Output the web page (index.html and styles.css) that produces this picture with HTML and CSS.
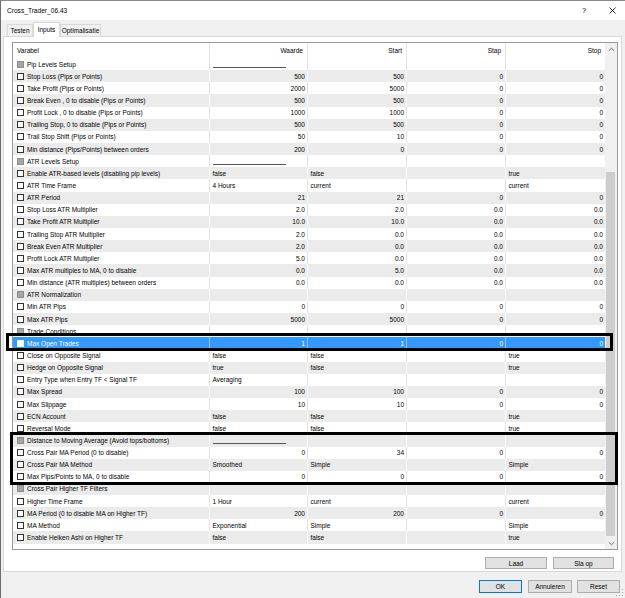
FILE: index.html
```html
<html lang="nl">
<head>
    <meta charset="UTF-8">
    <title>Cross_Trader_06.43</title>
    <link rel="stylesheet" href="styles.css">
</head>
<body>
<div class="window">
    <div class="titlebar">
        <div class="title">Cross_Trader_06.43</div>
        <div class="help">?</div>
        <div class="close">
            <svg width="7" height="7" viewBox="0 0 7 7"><path d="M0.5 0.5 L6.5 6.5 M6.5 0.5 L0.5 6.5" stroke="#000" stroke-width="0.8"/></svg>
        </div>
    </div>
    <div class="tabs">
        <div class="tab tab-testen">Testen</div>
        <div class="tab tab-inputs active">Inputs</div>
        <div class="tab tab-opt">Optimalisatie</div>
    </div>
    <div class="panel">
        <div class="grid">
            <div class="list">
                <div class="head">
                    <div class="h-left">Varabel</div>
                    <div>Waarde</div>
                    <div>Start</div>
                    <div>Stap</div>
                    <div>Stop</div>
                </div>
                <div class="rows">
                    <div class="row group"><div class="c"><span class="cb"></span>Pip Levels Setup</div><div class="t"><span class="line"></span></div><div></div><div></div><div></div></div>
                    <div class="row"><div class="c"><span class="cb"></span>Stop Loss (Pips or Points)</div><div class="n">500</div><div class="n">500</div><div class="n">0</div><div class="n">0</div></div>
                    <div class="row"><div class="c"><span class="cb"></span>Take Profit (Pips or Points)</div><div class="n">2000</div><div class="n">5000</div><div class="n">0</div><div class="n">0</div></div>
                    <div class="row"><div class="c"><span class="cb"></span>Break Even , 0 to disable (Pips or Points)</div><div class="n">500</div><div class="n">500</div><div class="n">0</div><div class="n">0</div></div>
                    <div class="row"><div class="c"><span class="cb"></span>Profit Lock , 0 to disable (Pips or Points)</div><div class="n">1000</div><div class="n">1000</div><div class="n">0</div><div class="n">0</div></div>
                    <div class="row"><div class="c"><span class="cb"></span>Trailing Stop, 0 to disable (Pips or Points)</div><div class="n">500</div><div class="n">500</div><div class="n">0</div><div class="n">0</div></div>
                    <div class="row"><div class="c"><span class="cb"></span>Trail Stop Shift (Pips or Points)</div><div class="n">50</div><div class="n">10</div><div class="n">0</div><div class="n">0</div></div>
                    <div class="row"><div class="c"><span class="cb"></span>Min distance (Pips/Points) between orders</div><div class="n">200</div><div class="n">0</div><div class="n">0</div><div class="n">0</div></div>
                    <div class="row group"><div class="c"><span class="cb"></span>ATR Levels Setup</div><div class="t"><span class="line"></span></div><div></div><div></div><div></div></div>
                    <div class="row"><div class="c"><span class="cb"></span>Enable ATR-based levels (disabling pip levels)</div><div class="t">false</div><div class="t">false</div><div></div><div class="t">true</div></div>
                    <div class="row"><div class="c"><span class="cb"></span>ATR Time Frame</div><div class="t">4 Hours</div><div class="t">current</div><div></div><div class="t">current</div></div>
                    <div class="row"><div class="c"><span class="cb"></span>ATR Period</div><div class="n">21</div><div class="n">21</div><div class="n">0</div><div class="n">0</div></div>
                    <div class="row"><div class="c"><span class="cb"></span>Stop Loss ATR Multiplier</div><div class="n">2.0</div><div class="n">2.0</div><div class="n">0.0</div><div class="n">0.0</div></div>
                    <div class="row"><div class="c"><span class="cb"></span>Take Profit ATR Multiplier</div><div class="n">10.0</div><div class="n">10.0</div><div class="n">0.0</div><div class="n">0.0</div></div>
                    <div class="row"><div class="c"><span class="cb"></span>Trailing Stop ATR Multiplier</div><div class="n">2.0</div><div class="n">0.0</div><div class="n">0.0</div><div class="n">0.0</div></div>
                    <div class="row"><div class="c"><span class="cb"></span>Break Even ATR Multiplier</div><div class="n">2.0</div><div class="n">0.0</div><div class="n">0.0</div><div class="n">0.0</div></div>
                    <div class="row"><div class="c"><span class="cb"></span>Profit Lock ATR Multiplier</div><div class="n">5.0</div><div class="n">0.0</div><div class="n">0.0</div><div class="n">0.0</div></div>
                    <div class="row"><div class="c"><span class="cb"></span>Max ATR multiples to MA, 0 to disable</div><div class="n">0.0</div><div class="n">5.0</div><div class="n">0.0</div><div class="n">0.0</div></div>
                    <div class="row"><div class="c"><span class="cb"></span>Min distance (ATR multiples) between orders</div><div class="n">0.0</div><div class="n">0.0</div><div class="n">0.0</div><div class="n">0.0</div></div>
                    <div class="row group"><div class="c"><span class="cb"></span>ATR Normalization</div><div></div><div></div><div></div><div></div></div>
                    <div class="row"><div class="c"><span class="cb"></span>Min ATR Pips</div><div class="n">0</div><div class="n">0</div><div class="n">0</div><div class="n">0</div></div>
                    <div class="row"><div class="c"><span class="cb"></span>Max ATR Pips</div><div class="n">5000</div><div class="n">5000</div><div class="n">0</div><div class="n">0</div></div>
                    <div class="row group"><div class="c"><span class="cb"></span>Trade Conditions</div><div></div><div></div><div></div><div></div></div>
                    <div class="row sel"><div class="c"><span class="cb"></span>Max Open Trades</div><div class="n">1</div><div class="n">1</div><div class="n">0</div><div class="n">0</div></div>
                    <div class="row"><div class="c"><span class="cb"></span>Close on Opposite Signal</div><div class="t">false</div><div class="t">false</div><div></div><div class="t">true</div></div>
                    <div class="row"><div class="c"><span class="cb"></span>Hedge on Opposite Signal</div><div class="t">true</div><div class="t">false</div><div></div><div class="t">true</div></div>
                    <div class="row"><div class="c"><span class="cb"></span>Entry Type when Entry TF &lt; Signal TF</div><div class="t">Averaging</div><div></div><div></div><div></div></div>
                    <div class="row"><div class="c"><span class="cb"></span>Max Spread</div><div class="n">100</div><div class="n">100</div><div class="n">0</div><div class="n">0</div></div>
                    <div class="row"><div class="c"><span class="cb"></span>Max Slippage</div><div class="n">10</div><div class="n">10</div><div class="n">0</div><div class="n">0</div></div>
                    <div class="row"><div class="c"><span class="cb"></span>ECN Account</div><div class="t">false</div><div class="t">false</div><div></div><div class="t">true</div></div>
                    <div class="row"><div class="c"><span class="cb"></span>Reversal Mode</div><div class="t">false</div><div class="t">false</div><div></div><div class="t">true</div></div>
                    <div class="row group"><div class="c"><span class="cb"></span>Distance to Moving Average (Avoid tops/bottoms)</div><div class="t"><span class="line"></span></div><div></div><div></div><div></div></div>
                    <div class="row"><div class="c"><span class="cb"></span>Cross Pair MA Period (0 to disable)</div><div class="n">0</div><div class="n">34</div><div class="n">0</div><div class="n">0</div></div>
                    <div class="row"><div class="c"><span class="cb"></span>Cross Pair MA Method</div><div class="t">Smoothed</div><div class="t">Simple</div><div></div><div class="t">Simple</div></div>
                    <div class="row"><div class="c"><span class="cb"></span>Max Pips/Points to MA, 0 to disable</div><div class="n">0</div><div class="n">0</div><div class="n">0</div><div class="n">0</div></div>
                    <div class="row group"><div class="c"><span class="cb"></span>Cross Pair Higher TF Filters</div><div></div><div></div><div></div><div></div></div>
                    <div class="row"><div class="c"><span class="cb"></span>Higher Time Frame</div><div class="t">1 Hour</div><div class="t">current</div><div></div><div class="t">current</div></div>
                    <div class="row"><div class="c"><span class="cb"></span>MA Period (0 to disable MA on Higher TF)</div><div class="n">200</div><div class="n">200</div><div class="n">0</div><div class="n">0</div></div>
                    <div class="row"><div class="c"><span class="cb"></span>MA Method</div><div class="t">Exponential</div><div class="t">Simple</div><div></div><div class="t">Simple</div></div>
                    <div class="row"><div class="c"><span class="cb"></span>Enable Heiken Ashi on Higher TF</div><div class="t">false</div><div class="t">false</div><div></div><div class="t">true</div></div>
                </div>
            </div>
            <div class="scroll">
                <div class="arrow">
                    <svg width="7" height="5" viewBox="0 0 7 5"><path d="M0.8 3.8 L3.5 1.2 L6.2 3.8" fill="none" stroke="#606060" stroke-width="0.9"/></svg>
                </div>
                <div class="track">
                    <div class="thumb"></div>
                </div>
                <div class="arrow">
                    <svg width="7" height="5" viewBox="0 0 7 5"><path d="M0.8 1.2 L3.5 3.8 L6.2 1.2" fill="none" stroke="#606060" stroke-width="0.9"/></svg>
                </div>
            </div>
        </div>
        <div class="panel-buttons">
            <div class="btn btn-laad">Laad</div>
            <div class="btn btn-slaop">Sla op</div>
        </div>
    </div>
    <div class="footer">
        <div class="btn btn-ok">OK</div>
        <div class="btn btn-cancel">Annuleren</div>
        <div class="btn btn-reset">Reset</div>
    </div>

    <!-- annotation boxes drawn over the list -->
    <div class="mark mark-1"></div>
    <div class="mark mark-2"></div>

    <svg class="grip" width="8" height="8" viewBox="0 0 8 8">
        <rect x="6" y="0" width="1" height="1" fill="#aaa"/>
        <rect x="3" y="3" width="1" height="1" fill="#aaa"/>
        <rect x="6" y="3" width="1" height="1" fill="#aaa"/>
        <rect x="0" y="6" width="1" height="1" fill="#aaa"/>
        <rect x="3" y="6" width="1" height="1" fill="#aaa"/>
        <rect x="6" y="6" width="1" height="1" fill="#aaa"/>
    </svg>
</div>
</body>
</html>
```

FILE: styles.css
```css
* {
    box-sizing: border-box;
}
body {
    margin: 0;
    background: #f0f0f0;
    font-family: "Liberation Sans", Arial, sans-serif;
    font-size: 6.5px;
    color: #000;
}
.window {
    position: relative;
    width: 625px;
    height: 598px;
    border-left: 1px solid #6d6d6d;
    border-top: 1px solid #8a8a8a;
    overflow: hidden;
}
.titlebar {
    height: 19px;
    background: #fff;
    display: flex;
    align-items: center;
    padding-left: 6px;
}
.title {
    flex: 1;
    font-size: 6.6px;
}
.help {
    width: 30px;
    text-align: center;
    font-size: 7px;
}
.close {
    width: 26px;
    display: flex;
    justify-content: center;
}
.tabs {
    height: 16px;
    display: flex;
    align-items: flex-end;
    padding-left: 6px;
}
.tab {
    height: 12px;
    border: 1px solid #d9d9d9;
    border-bottom: none;
    background: #f0f0f0;
    display: flex;
    align-items: center;
    justify-content: center;
}
.tab-testen {
    width: 26px;
}
.tab-inputs {
    width: 27px;
}
.tab-opt {
    width: 41px;
}
.tab.active {
    height: 15px;
    background: #fff;
    margin-bottom: -1px;
    position: relative;
    z-index: 1;
    padding-bottom: 2px;
}
.panel {
    margin: 0 3px 0 2px;
    height: 536px;
    border: 1px solid #d9d9d9;
    background: #fff;
    padding: 5px 3px 0 8px;
}
.grid {
    height: 508px;
    border: 1px solid #9a9a9a;
    display: flex;
}
.list {
    width: 592px;
}
.head,
.row {
    display: grid;
    grid-template-columns: 196px 98px 99px 99px 100px;
}
.head {
    height: 15px;
    background: #fff;
}
.head > div {
    display: flex;
    align-items: center;
    justify-content: flex-end;
    padding: 0 4px;
    border-left: 1px solid #e5e5e5;
}
.head > .h-left {
    justify-content: flex-start;
    border-left: none;
    padding-left: 4px;
}
.row {
    height: 12.15px;
    background: #fff;
}
.rows .row:nth-child(even) {
    background: #ebebeb;
}
.row > div {
    display: flex;
    align-items: center;
    border-left: 1px solid #e2e2e2;
    padding: 0 2px;
    white-space: nowrap;
    overflow: hidden;
}
.rows .row:nth-child(even) > div {
    border-left-color: #fbfbfb;
}
.row > .c {
    border-left: none;
    padding-left: 3.5px;
}
.row > .n {
    justify-content: flex-end;
}
.row > .t {
    padding-left: 2.5px;
}
.cb {
    width: 7px;
    height: 7px;
    border: 1px solid #333;
    background: #fff;
    margin-right: 3.5px;
    flex: none;
}
.group .cb {
    border-color: #8c8c8c;
    background: #a6a6a6;
}
.line {
    width: 73px;
    height: 1px;
    background: #555;
    margin-top: 6px;
}
.rows .row.sel {
    background: #3399ff;
    color: #fff;
}
.rows .row.sel > div {
    border-left-color: #8cc4ff;
}
.row.sel .cb {
    border-color: #e8f2ff;
}
.scroll {
    width: 12px;
    background: #f0f0f0;
    display: flex;
    flex-direction: column;
}
.arrow {
    height: 12px;
    display: flex;
    align-items: center;
    justify-content: center;
}
.track {
    flex: 1;
    display: flex;
    flex-direction: column;
    padding: 117px 2px 1px 1px;
}
.thumb {
    flex: 1;
    background: #cdcdcd;
}
.btn {
    height: 12px;
    background: #e1e1e1;
    border: 1px solid #adadad;
    display: flex;
    align-items: center;
    justify-content: center;
}
.panel-buttons {
    display: flex;
    justify-content: flex-end;
    gap: 6px;
    margin-top: 7px;
    padding-right: 4px;
}
.btn-laad {
    width: 62px;
}
.btn-slaop {
    width: 61px;
}
.footer {
    display: flex;
    justify-content: flex-end;
    gap: 5px;
    margin-top: 8px;
    padding-right: 5px;
}
.footer .btn {
    height: 13px;
}
.btn-ok {
    width: 43px;
    border-color: #0078d7;
    margin-right: 1px;
}
.btn-cancel {
    width: 44px;
}
.btn-reset {
    width: 43px;
}
.mark {
    position: absolute;
    border: 3px solid #000;
}
.mark-1 {
    left: 5px;
    top: 332px;
    width: 607px;
    height: 18px;
}
.mark-2 {
    left: 9px;
    top: 431px;
    width: 608px;
    height: 53px;
}
.grip {
    position: absolute;
    right: 1px;
    bottom: 1px;
}
```
